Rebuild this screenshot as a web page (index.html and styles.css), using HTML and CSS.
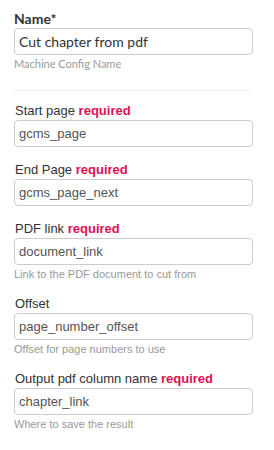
FILE: index.html
```html
<!DOCTYPE html>
<html lang="en">
<head>
    <meta charset="UTF-8">
    <meta name="viewport" content="width=device-width, initial-scale=1.0">
    <title>Machine Config</title>
    <link rel="stylesheet" href="styles.css">
</head>
<body>
    <form class="config">
        <div class="head">
            <label class="head-label">Name*</label>
            <input class="head-input" type="text" value="Cut chapter from pdf">
            <div class="head-help">Machine Config Name</div>
        </div>
        <hr class="divider">
        <div class="field">
            <label>Start page <span class="req">required</span></label>
            <input type="text" value="gcms_page">
        </div>
        <div class="field">
            <label>End Page <span class="req">required</span></label>
            <input type="text" value="gcms_page_next">
        </div>
        <div class="field">
            <label>PDF link <span class="req">required</span></label>
            <input type="text" value="document_link">
            <div class="help">Link to the PDF document to cut from</div>
        </div>
        <div class="field">
            <label>Offset</label>
            <input type="text" value="page_number_offset">
            <div class="help">Offset for page numbers to use</div>
        </div>
        <div class="field">
            <label>Output pdf column name <span class="req">required</span></label>
            <input type="text" value="chapter_link">
            <div class="help">Where to save the result</div>
        </div>
    </form>
</body>
</html>
```
FILE: styles.css
```css
*{
    margin: 0;
    padding: 0;
    box-sizing: border-box;
}
body{
    background: #fff;
    font-family: "Liberation Sans", Arial, sans-serif;
    color: #333;
}
.config{
    width: 239px;
    margin-left: 14px;
    padding-top: 10px;
}
.head label,
.field label{
    display: block;
    font-size: 13px;
    line-height: 17px;
    margin-bottom: 1px;
    padding-left: 1px;
}
.head{
    font-family: Lato, sans-serif;
}
.head label{
    font-size: 14px;
    padding-left: 0;
}
.head-label{
    font-weight: bold;
}
input{
    display: block;
    width: 100%;
    height: 27px;
    border: 1px solid #ccc;
    border-radius: 4px;
    padding: 0 4px;
    font-family: inherit;
    font-size: 13px;
    color: #555;
    background: #fff;
}
.head-input{
    font-size: 14px;
    color: #333;
}
.head-help{
    margin-top: 2px;
    font-size: 11px;
    line-height: 14px;
    color: #999;
}
.divider{
    border: 0;
    border-top: 1px solid #eee;
    margin: 19px 2px 11px 0;
}
.field{
    margin-bottom: 14px;
}
.req{
    color: #dd1155;
    font-weight: bold;
}
.help{
    margin-top: 2px;
    font-size: 11px;
    line-height: 14px;
    color: #999;
}
```
